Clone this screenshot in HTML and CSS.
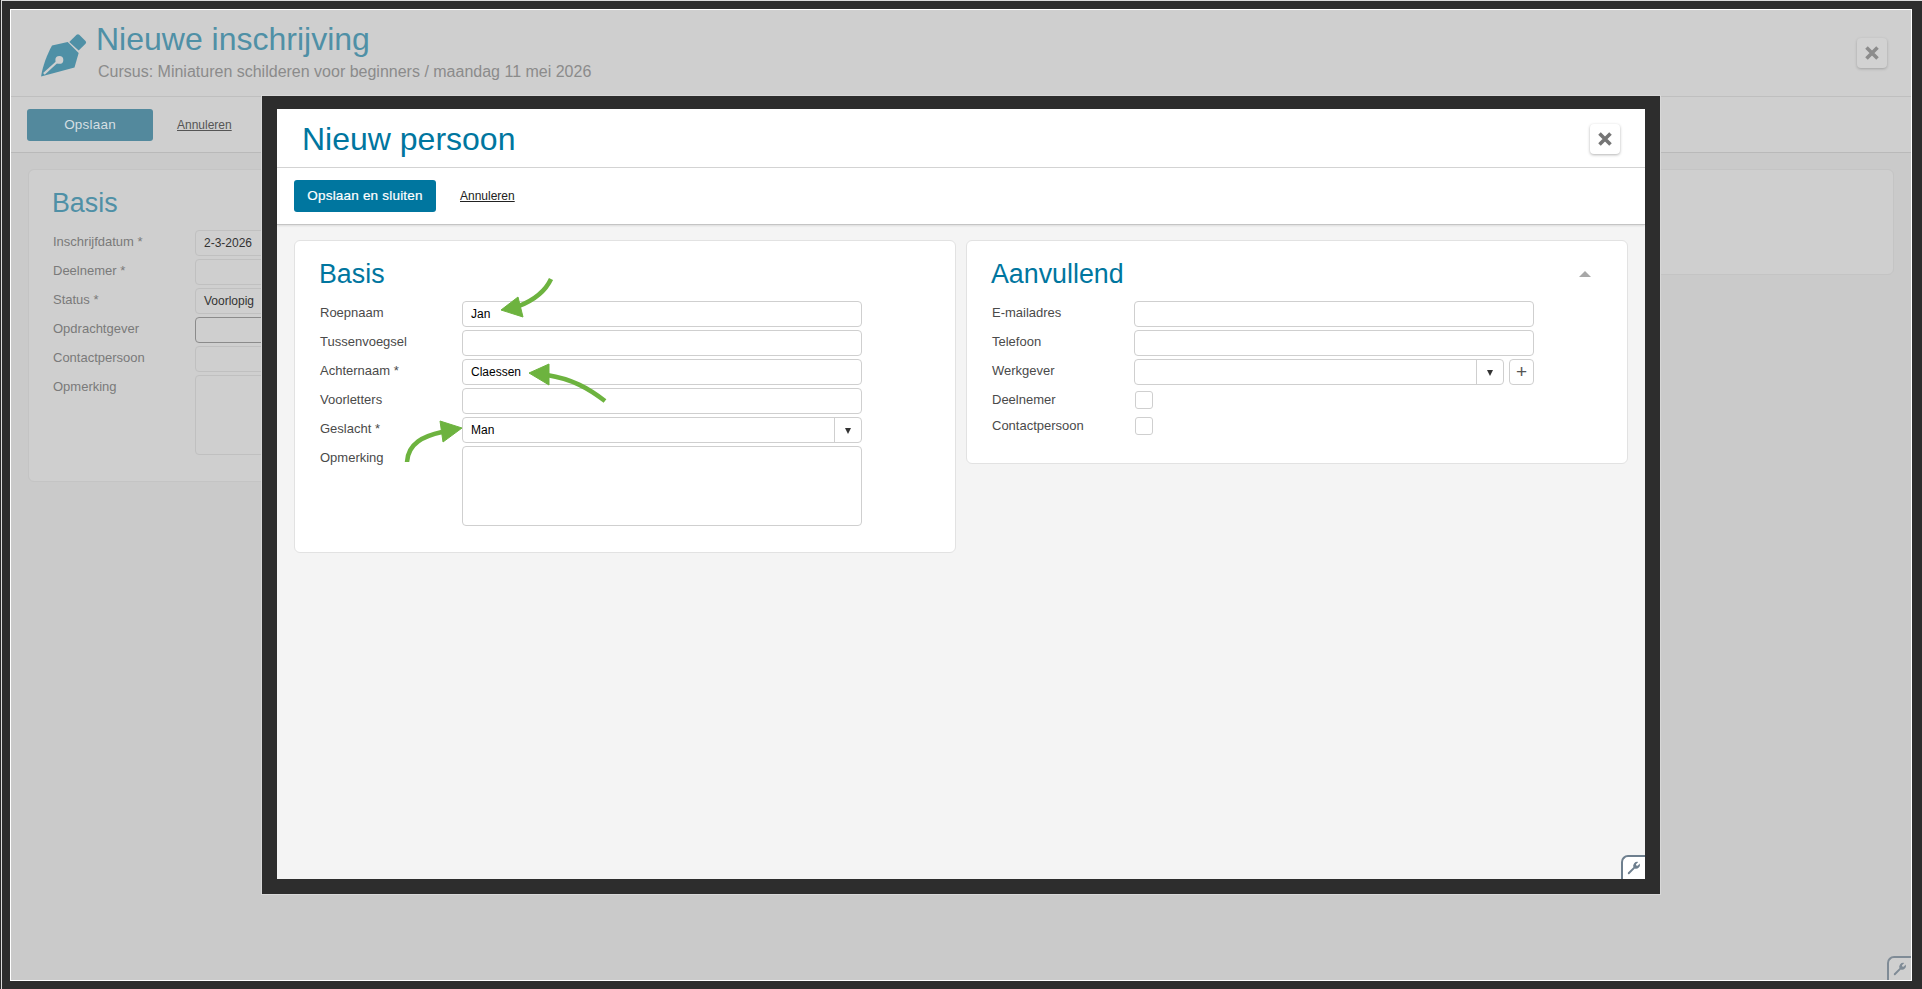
FILE: index.html
```html
<!DOCTYPE html>
<html lang="nl">
<head>
<meta charset="utf-8">
<title>Nieuwe inschrijving</title>
<link rel="stylesheet" href="styles.css">
</head>
<body>
<div class="window">
  <header class="page-head">
    <svg class="pen" viewBox="0 0 46 44" width="48" height="46">
      <path class="pen-fill" d="M29 9.5 36 2.6a2 2 0 0 1 2.6 0l6 6a2 2 0 0 1 0 2.6L38 17.6z"/>
      <path class="pen-fill" d="M12.5 13 27.5 9.5 38 20 34 34 2 42.5 C3.5 33 7.5 22 12.5 13z"/>
      <path class="pen-slit" d="M4.7 40 18.5 27.5"/>
      <circle class="pen-hole" cx="19.5" cy="26.7" r="3.8"/>
    </svg>
    <div class="page-titles">
      <h1 class="page-title">Nieuwe inschrijving</h1>
      <p class="page-sub">Cursus: Miniaturen schilderen voor beginners / maandag 11 mei 2026</p>
    </div>
    <button class="close close-dim" aria-label="Sluiten">
      <svg viewBox="0 0 14 14" width="14" height="14"><path d="M1.5 1.5 12.5 12.5M12.5 1.5 1.5 12.5"/></svg>
    </button>
  </header>
  <div class="page-bar">
    <a class="btn-dim">Opslaan</a>
    <a class="link-dim">Annuleren</a>
  </div>
  <main class="page-body">
    <section class="card-dim card-dim-left">
      <h2 class="card-title-dim">Basis</h2>
      <div class="form-dim">
        <label>Inschrijfdatum *</label><div class="in-dim">2-3-2026</div>
        <label>Deelnemer *</label><div class="in-dim"></div>
        <label>Status *</label><div class="in-dim">Voorlopig</div>
        <label>Opdrachtgever</label><div class="in-dim in-focus"></div>
        <label>Contactpersoon</label><div class="in-dim"></div>
        <label>Opmerking</label><div class="in-dim in-area"></div>
      </div>
    </section>
    <section class="card-dim card-dim-right"></section>
  </main>
  <div class="tool-tab tool-tab-dim">
    <svg viewBox="0 0 14 14" width="14" height="14"><path d="M12.8 2.6 10.6 4.8 9.2 4.6 9 3.2 11.2 1A4 4 0 0 0 6.4 6.2L1 11.6A1 1 0 0 0 2.4 13L7.8 7.6A4 4 0 0 0 12.8 2.6Z"/></svg>
  </div>
</div>

<div class="modal">
  <div class="modal-inner">
    <header class="modal-head">
      <h1 class="modal-title">Nieuw persoon</h1>
      <button class="close" aria-label="Sluiten">
        <svg viewBox="0 0 14 14" width="14" height="14"><path d="M1.5 1.5 12.5 12.5M12.5 1.5 1.5 12.5"/></svg>
      </button>
    </header>
    <div class="modal-bar">
      <a class="btn">Opslaan en sluiten</a>
      <a class="link">Annuleren</a>
    </div>
    <div class="modal-body">
      <section class="card">
        <h2 class="card-title">Basis</h2>
        <div class="form form-basis">
          <label>Roepnaam</label><div class="in">Jan</div>
          <label>Tussenvoegsel</label><div class="in"></div>
          <label>Achternaam *</label><div class="in">Claessen</div>
          <label>Voorletters</label><div class="in"></div>
          <label>Geslacht *</label><div class="in in-select"><span class="in-value">Man</span><span class="caret"></span></div>
          <label>Opmerking</label><div class="in in-area"></div>
        </div>
      </section>
      <section class="card card-extra">
        <div class="card-row">
          <h2 class="card-title">Aanvullend</h2>
          <span class="collapse"></span>
        </div>
        <div class="form form-extra">
          <label>E-mailadres</label><div class="in"></div>
          <label>Telefoon</label><div class="in"></div>
          <label>Werkgever</label>
          <div class="combo">
            <div class="in in-select"><span class="in-value"></span><span class="caret"></span></div>
            <button class="plus">+</button>
          </div>
          <label class="label-check">Deelnemer</label><div class="check"></div>
          <label class="label-check">Contactpersoon</label><div class="check"></div>
        </div>
      </section>
    </div>
    <div class="tool-tab">
      <svg viewBox="0 0 14 14" width="14" height="14"><path d="M12.8 2.6 10.6 4.8 9.2 4.6 9 3.2 11.2 1A4 4 0 0 0 6.4 6.2L1 11.6A1 1 0 0 0 2.4 13L7.8 7.6A4 4 0 0 0 12.8 2.6Z"/></svg>
    </div>
  </div>
</div>

<svg class="arrows" viewBox="0 0 1922 989" width="1922" height="989">
  <path class="arrow-line" d="M551 279C545 292 534 300 519 306"/>
  <path class="arrow-head" d="M501 310 518 297 523 317Z"/>
  <path class="arrow-line" d="M605 401C588 388 572 379 547 375"/>
  <path class="arrow-head" d="M529 373 549 364 549 385Z"/>
  <path class="arrow-line" d="M407 462C408 443 424 436 442 432"/>
  <path class="arrow-head" d="M462 428 440 421 443 442Z"/>
</svg>
</body>
</html>
```
FILE: styles.css
```css
* { box-sizing: border-box; }
html, body { margin: 0; padding: 0; }
body {
  position: relative;
  width: 1922px;
  height: 989px;
  overflow: hidden;
  background: #2d2d2d;
  font-family: "Liberation Sans", Arial, sans-serif;
  padding: 9px 10px 8px 10px;
}
body::before {
  content: "";
  position: absolute;
  left: 1px;
  top: 0;
  bottom: 0;
  width: 1px;
  background: #dcdcdc;
}
body::after {
  content: "";
  position: absolute;
  left: 1px;
  right: 0;
  top: 0;
  height: 1px;
  background: #dcdcdc;
}
h1, h2, p { margin: 0; font-weight: 400; }
a { cursor: pointer; }
button { font-family: inherit; padding: 0; }

/* Dimmed page behind the dialog */
.window {
  position: relative;
  width: 1902px;
  height: 972px;
  border: 1px solid #fff;
  background: #cacaca;
  display: flex;
  flex-direction: column;
}
.page-head {
  height: 86px;
  background: #cfcfcf;
  display: flex;
  align-items: flex-start;
  padding: 21px 24px 0 27px;
}
.pen { flex: none; margin: 1px 0 0 1px; }
.pen-fill { fill: #4f90a6; }
.pen-slit { stroke: #cfcfcf; stroke-width: 2.2; fill: none; }
.pen-hole { fill: #cfcfcf; }
.page-titles { flex: 1; margin-left: 9px; margin-top: -10px; }
.page-title {
  font-size: 32px;
  line-height: 36px;
  color: #4f90a6;
}
.page-sub {
  margin-top: 6px;
  margin-left: 2px;
  font-size: 16px;
  line-height: 18px;
  color: #8b8b8b;
}
.close {
  flex: none;
  width: 30px;
  height: 30px;
  border: 0;
  border-radius: 4px;
  background: #fff;
  box-shadow: 0 1px 3px rgba(0,0,0,.3);
  display: flex;
  align-items: center;
  justify-content: center;
}
.close path { stroke: #757575; stroke-width: 3.6; fill: none; }
.close-dim { margin-top: 7px; background: #d2d2d2; box-shadow: 0 1px 3px rgba(0,0,0,.22); }
.close-dim path { stroke: #8c8c8c; }
.page-bar {
  height: 57px;
  background: #cfcfcf;
  border-top: 1px solid #bfbfbf;
  border-bottom: 1px solid #b9b9b9;
  display: flex;
  align-items: center;
  padding-left: 16px;
}
.btn-dim {
  width: 126px;
  height: 32px;
  border-radius: 3px;
  background: #53899d;
  color: #d5dfe3;
  font-size: 13.5px;
  line-height: 32px;
  letter-spacing: .2px;
  text-align: center;
}
.link-dim {
  margin-left: 24px;
  font-size: 12px;
  color: #555;
  text-decoration: underline;
}
.page-body {
  display: grid;
  grid-template-columns: 928px 928px;
  column-gap: 10px;
  align-items: start;
  padding: 16px 17px;
}
.card-dim {
  border: 1px solid #c4c4c4;
  border-radius: 6px;
  background: #cfcfcf;
}
.card-dim-left { height: 313px; padding: 18px 24px 0; }
.card-dim-right { height: 106px; }
.card-title-dim {
  margin-left: -1px;
  font-size: 26.8px;
  line-height: 30px;
  color: #4f90a6;
}
.form-dim {
  margin-top: 12px;
  display: grid;
  grid-template-columns: 142px 400px;
  row-gap: 3px;
}
.form-dim label {
  font-size: 13px;
  line-height: 24px;
  color: #7a7a7a;
}
.in-dim {
  height: 26px;
  border: 1px solid #c0c0c0;
  border-radius: 4px;
  padding-left: 8px;
  font-size: 12px;
  line-height: 24px;
  color: #333;
}
.in-dim.in-focus { border-color: #8b8b8b; }
.in-dim.in-area { height: 80px; }

/* Dialog */
.modal {
  position: absolute;
  left: 261px;
  top: 95px;
  width: 1400px;
  height: 800px;
  border: 1px solid #d8d8d8;
  background: #2d2d2d;
  padding: 13px 15px 15px;
}
.modal-inner {
  position: relative;
  height: 100%;
  background: #f4f4f4;
  display: flex;
  flex-direction: column;
}
.modal-head {
  height: 59px;
  background: #fff;
  border-bottom: 1px solid #d4d4d4;
  display: flex;
  align-items: flex-start;
  justify-content: space-between;
  padding: 15px 25px 0 25px;
}
.modal-title {
  margin-top: -3px;
  font-size: 32px;
  line-height: 36px;
  color: #00769f;
}
.modal-bar {
  height: 57px;
  background: #fff;
  border-bottom: 1px solid #c4c4c4;
  box-shadow: 0 1px 2px rgba(0,0,0,.1);
  display: flex;
  align-items: center;
  padding-left: 17px;
}
.btn {
  width: 142px;
  height: 32px;
  border-radius: 3px;
  background: #00769f;
  color: #fff;
  font-size: 13.5px;
  line-height: 32px;
  letter-spacing: .2px;
  -webkit-text-stroke: .2px #fff;
  text-align: center;
}
.link {
  margin-left: 24px;
  font-size: 12px;
  color: #222;
  text-decoration: underline;
}
.modal-body {
  display: grid;
  grid-template-columns: 662px 662px;
  column-gap: 10px;
  align-items: start;
  padding: 15px 17px;
}
.card {
  height: 313px;
  border: 1px solid #e2e2e2;
  border-radius: 6px;
  background: #fff;
  padding: 18px 25px 0;
}
.card-extra { height: 224px; }
.card-row {
  display: flex;
  justify-content: space-between;
  align-items: center;
  padding-right: 11px;
}
.card-title {
  margin-left: -1px;
  font-size: 26.8px;
  line-height: 30px;
  color: #00769f;
}
.collapse {
  width: 0;
  height: 0;
  border-left: 6px solid transparent;
  border-right: 6px solid transparent;
  border-bottom: 6px solid #a8a8a8;
}
.form {
  margin-top: 12px;
  display: grid;
  grid-template-columns: 142px 400px;
  row-gap: 3px;
  align-items: start;
}
.form label {
  font-size: 13px;
  line-height: 24px;
  color: #4a4a4a;
}
.in {
  height: 26px;
  border: 1px solid #cfcfcf;
  border-radius: 4px;
  background: #fff;
  padding-left: 8px;
  font-size: 12px;
  line-height: 24px;
  color: #000;
}
.in-area { height: 80px; }
.in-select {
  display: flex;
  padding-left: 0;
}
.in-value { flex: 1; padding-left: 8px; }
.caret {
  flex: none;
  width: 27px;
  border-left: 1px solid #cfcfcf;
  position: relative;
}
.caret::after {
  content: "";
  position: absolute;
  left: 10px;
  top: 10px;
  border-left: 3.5px solid transparent;
  border-right: 3.5px solid transparent;
  border-top: 6px solid #333;
}
.combo {
  display: grid;
  grid-template-columns: 370px 25px;
  column-gap: 5px;
}
.plus {
  height: 26px;
  border: 1px solid #cfcfcf;
  border-radius: 4px;
  background: #fff;
  color: #555;
  font-size: 19px;
  line-height: 22px;
}
.check {
  width: 18px;
  height: 18px;
  margin: 3px 0 2px 1px;
  border: 1px solid #cfcfcf;
  border-radius: 3px;
  background: #fff;
}
.form .label-check { line-height: 23px; }

/* Corner tool tab */
.tool-tab {
  position: absolute;
  right: 0;
  bottom: 0;
  width: 24px;
  height: 24px;
  background: #fff;
  border-top: 2px solid #6e7f8e;
  border-left: 2px solid #6e7f8e;
  border-top-left-radius: 7px;
  display: flex;
  align-items: center;
  justify-content: center;
}
.tool-tab path { fill: #6e7f8e; }
.tool-tab-dim { background: #cfcfcf; border-color: #7f8b96; }
.tool-tab-dim path { fill: #7f8b96; }

/* Annotation arrows over the dialog */
.arrows {
  position: absolute;
  left: 0;
  top: 0;
  pointer-events: none;
}
.arrow-line { fill: none; stroke: #6db33f; stroke-width: 4.5; }
.arrow-head { fill: #6db33f; stroke: #6db33f; stroke-width: 1; stroke-linejoin: round; }
```
